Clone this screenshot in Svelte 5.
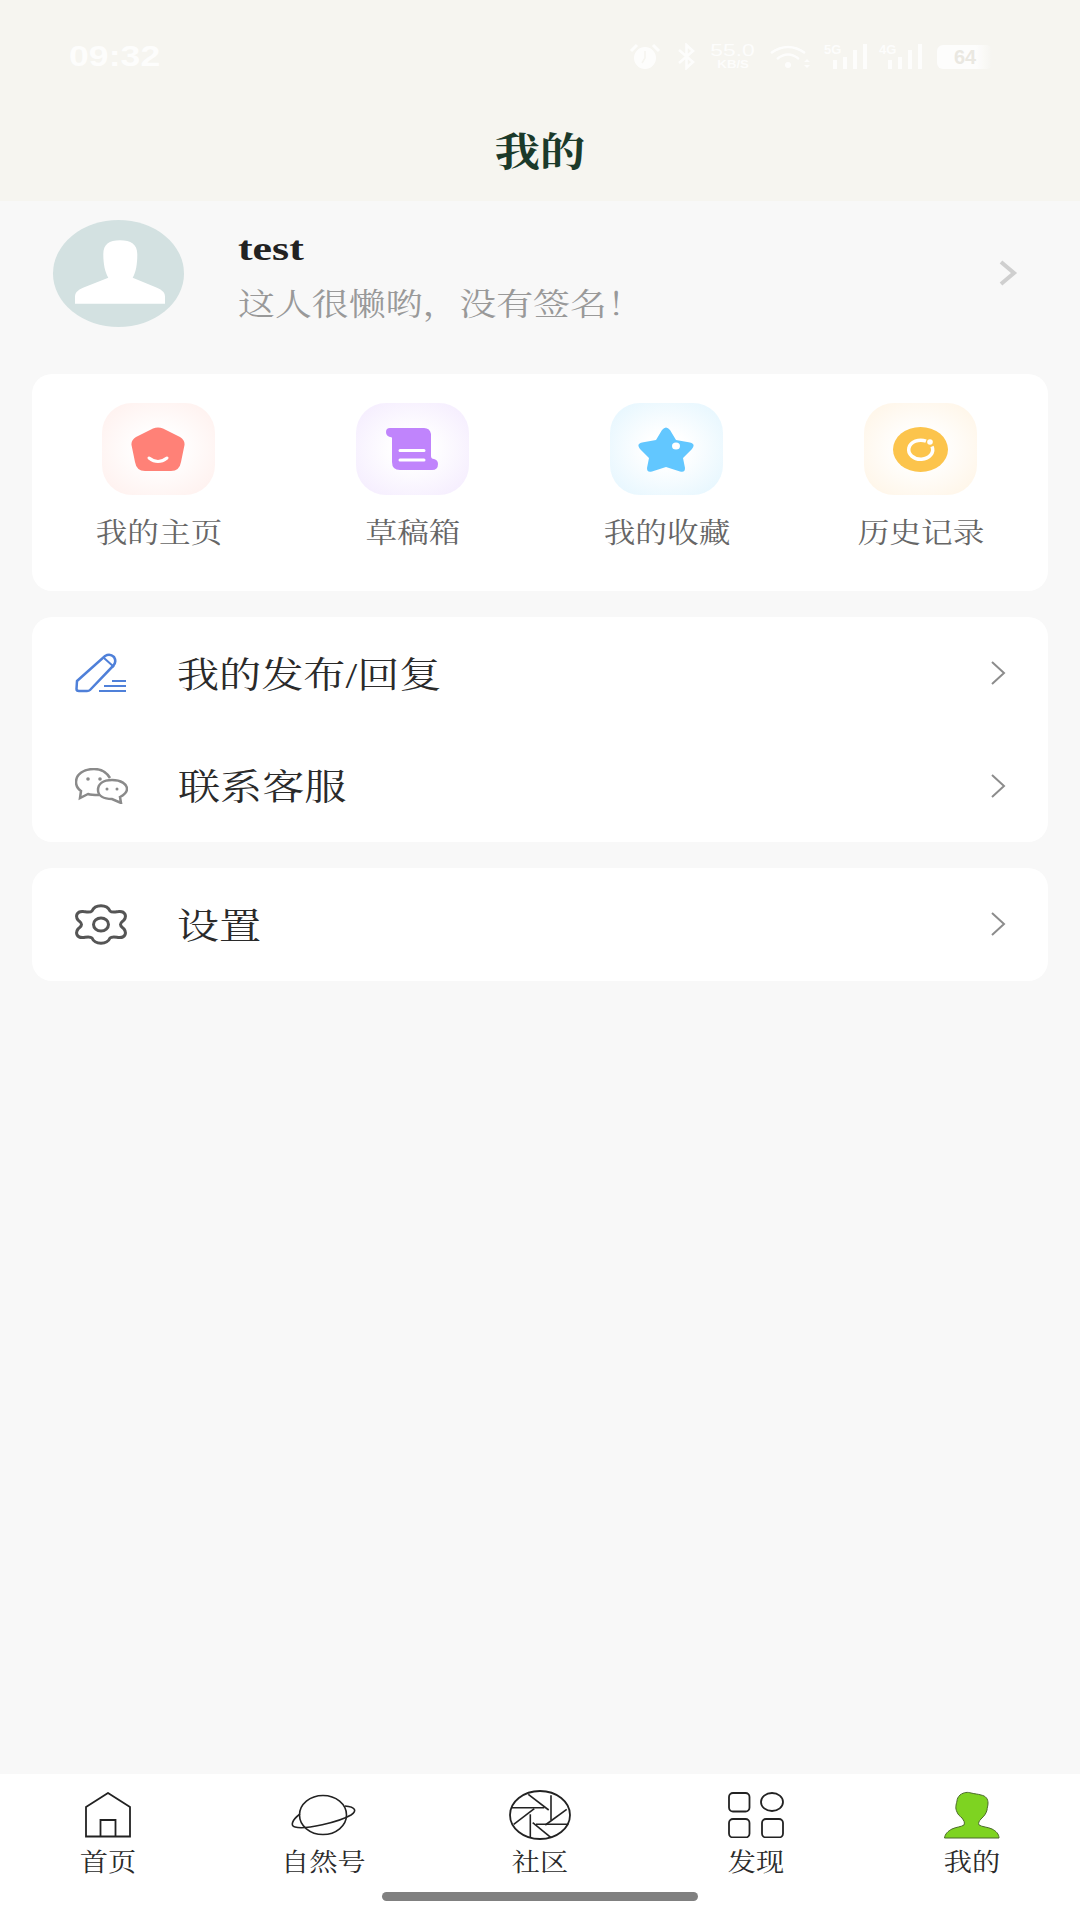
<script>
	const gridItems = [
		{ label: '我的主页', tone: 'red' },
		{ label: '草稿箱', tone: 'purple' },
		{ label: '我的收藏', tone: 'blue' },
		{ label: '历史记录', tone: 'amber' }
	];

	const tabs = ['首页', '自然号', '社区', '发现', '我的'];

	// shutter blades of the community tab icon
	const blades = [
		[19.3, 4.3, 39.7, 20],
		[42, 5.3, 42, 30],
		[57.7, 19.3, 36.3, 35],
		[59.3, 34.3, 27, 34.3],
		[42, 47.7, 23.7, 32.7],
		[21.3, 47.7, 21.3, 24.3],
		[4.7, 34.3, 25.3, 18.7],
		[3, 17.7, 35.3, 17.7]
	];
</script>

<div class="page">
	<header class="top">
		<div class="status">
			<span class="time">09:32</span>
			<div class="status-icons">
				<svg width="32" height="27" viewBox="0 0 32 27">
					<circle cx="16" cy="15" r="11" fill="#fff" />
					<path d="M2 8 L8 2 M30 8 L24 2" stroke="#fff" stroke-width="3" />
					<path d="M16 8v7l-3 5" stroke="#f6f5f0" stroke-width="1.5" fill="none" />
				</svg>
				<svg class="bt" width="19" height="27" viewBox="0 0 19 27">
					<path d="M2 7 L16 19 L9.5 25 V2 L16 8 L2 20" stroke="#fff" stroke-width="2.6" fill="none" />
				</svg>
				<div class="speed"><b>55.0</b><i>KB/S</i></div>
				<svg class="wifi" width="42" height="24" viewBox="0 0 42 24">
					<path d="M1 8 Q18 -4 35 8 M7 14 Q18 5 29 14" stroke="#fff" stroke-width="2.6" fill="none" />
					<circle cx="18" cy="20" r="3" fill="#fff" />
					<path d="M37 14l3 3h-6zM37 23l3-3h-6z" fill="#fff" />
				</svg>
				{#each ['5G', '4G'] as net}
					<div class="signal">
						<span class="net">{net}</span>
						<span class="bar" style="height: 9px"></span>
						<span class="bar" style="height: 12px"></span>
						<span class="bar" style="height: 19px"></span>
						<span class="bar" style="height: 25px"></span>
					</div>
				{/each}
				<div class="battery"><span>64</span></div>
			</div>
		</div>
		<h1><span class="wide">我的</span></h1>
	</header>

	<main>
		<section class="profile">
			<div class="avatar">
				<svg width="90" height="64" viewBox="0 0 90 63.3">
					<path d="M28.3 14 C28.300 4 34 0 45 0 C56 0 62.300 4 62.300 14 C62.300 24 61 32 57.700 37.300 L82 47.500 Q90 51 90 56 V63.300 H0 V56 Q0 51 8 47.500 L33.300 37.300 C30 32 28.300 24 28.300 14Z" fill="#fff" />
				</svg>
			</div>
			<div class="who">
				<div class="name"><span class="wide left">test</span></div>
				<div class="bio"><span class="wide left">这人很懒哟，没有签名！</span></div>
			</div>
			<svg class="go" width="20" height="26" viewBox="0 0 20 26">
				<path d="M3 2 L16 13 L3 24" stroke="#cfcfcf" stroke-width="4" fill="none" />
			</svg>
		</section>

		<section class="card grid">
			{#each gridItems as item}
				<div class="cell">
					<div class="tile {item.tone}">
						{#if item.tone === 'red'}
							<svg width="54" height="44" viewBox="0 0 54 44">
								<path d="M22 1.5 Q27 -0.5 32 1.5 L49 10 Q54 13 53.500 18 L50 35 Q48.500 44 40 44 H14 Q5.500 44 4 35 L0.500 18 Q0 13 5 10Z" fill="#ff8177" />
								<path d="M18 31 Q27 38 36 31" stroke="#fff" stroke-width="3" stroke-linecap="round" fill="none" />
							</svg>
						{:else if item.tone === 'purple'}
							<svg width="52" height="42" viewBox="0 0 52 42">
								<path d="M4 0 H38 Q44 0 45 6 V28 Q45 31 48 31 Q52 32 52 36 Q52 42 46 42 H14 Q6 42 6 34 V10 Q6 9 4 9 Q0 8 0 4 Q0 0 4 0Z" fill="#c084fc" />
								<path d="M14 22.500 H38 M14 32 H38" stroke="#fff" stroke-width="3" stroke-linecap="round" />
							</svg>
						{:else if item.tone === 'blue'}
							<svg width="56" height="45" viewBox="0 0 56 45">
								<path d="M24 3 Q28 -2 32 3 L38 13 L52 15.500 Q58 17 54 22 L45 31 L47 41 Q47 46 42 44.500 L28 40 L14 44.500 Q9 46 9 41 L11 31 L2 22 Q-2 17 4 15.500 L18 13Z" fill="#62c7ff" />
								<ellipse cx="38" cy="19" rx="4" ry="3.500" fill="#fff" />
							</svg>
						{:else}
							<svg width="55" height="45" viewBox="0 0 55 45">
								<ellipse cx="27.500" cy="22.500" rx="27.500" ry="22.500" fill="#fcc44c" />
								<path d="M33 14.200 A12 9.500 0 1 0 39 19.500" stroke="#fff" stroke-width="3.500" fill="none" />
								<circle cx="37" cy="15" r="2.800" fill="#fff" />
							</svg>
						{/if}
					</div>
					<div class="cell-label"><span class="wide">{item.label}</span></div>
				</div>
			{/each}
		</section>

		<section class="card list">
			<div class="row">
				<svg width="52" height="40" viewBox="0 0 52 40">
					<path d="M2 28 L30 3 Q35 0 39 4 Q42 9 38 13 L15 37 Q14 38 12 38 H4 Q1.500 38 1.500 36Z" stroke="#4f80d9" stroke-width="2.500" fill="none" />
					<path d="M29 5 L39 14 M37 28 H51 M29 33 H51 M24 38 H51" stroke="#4f80d9" stroke-width="2" fill="none" />
				</svg>
				<span class="row-label"><span class="wide left">我的发布/回复</span></span>
				<svg class="more" width="16" height="26" viewBox="0 0 16 26">
					<path d="M2 2 L14 13 L2 24" stroke="#8c8c8c" stroke-width="2" fill="none" />
				</svg>
			</div>
			<div class="row">
				<svg width="53" height="36" viewBox="0 0 53 36">
					<path d="M19 1 C9 1 1 6 1 14 C1 18 3 21 6 23 L5 30 L13 26 C16 27 19 27 24 27 M35 10 C32 5 27 1 19 1" stroke="#8a8a8a" stroke-width="2.500" fill="none" />
					<path d="M37 12 C28 12 23 16 23 22 C23 28 29 31 37 31 L46 35 L45 29 C49 27 52 25 52 21 C52 16 46 12 37 12Z" stroke="#8a8a8a" stroke-width="2.500" fill="#fff" />
					<circle cx="13" cy="11" r="1.800" fill="#8a8a8a" />
					<circle cx="25" cy="11" r="1.800" fill="#8a8a8a" />
					<circle cx="32" cy="21" r="1.500" fill="#8a8a8a" />
					<circle cx="42" cy="21" r="1.500" fill="#8a8a8a" />
				</svg>
				<span class="row-label"><span class="wide left">联系客服</span></span>
				<svg class="more" width="16" height="26" viewBox="0 0 16 26">
					<path d="M2 2 L14 13 L2 24" stroke="#8c8c8c" stroke-width="2" fill="none" />
				</svg>
			</div>
		</section>

		<section class="card list single">
			<div class="row">
				<svg width="52" height="42" viewBox="-1.500 -1 51 42">
					<path d="M15 7 C18 0 30 0 33 7 C35 9 38 8 42 7.500 C48 7 50 12 47 16 C45 18 43.500 18.500 43.500 20.500 C43.500 22.500 45 23 47 25 C50 29 48 34 42 33.500 C38 33 35 32 33 34 C30 41 18 41 15 34 C13 32 10 33 6 33.500 C0 34 -2 29 1 25 C3 23 4.500 22.500 4.500 20.500 C4.500 18.500 3 18 1 16 C-2 12 0 7 6 7.500 C10 8 13 9 15 7Z" stroke="#555" stroke-width="3" fill="none" />
					<ellipse cx="24" cy="20.500" rx="7.500" ry="6.500" stroke="#555" stroke-width="3" fill="none" />
				</svg>
				<span class="row-label"><span class="wide left">设置</span></span>
				<svg class="more" width="16" height="26" viewBox="0 0 16 26">
					<path d="M2 2 L14 13 L2 24" stroke="#8c8c8c" stroke-width="2" fill="none" />
				</svg>
			</div>
		</section>
	</main>

	<nav class="tabbar">
		<div class="tabs">
			{#each tabs as tab, i}
				<div class="tab">
					<div class="tab-icon">
						{#if i === 0}
							<svg width="46" height="46" viewBox="0 0 46 46">
								<path d="M1 15 L23 1 L45 15 V44.500 H1Z M15.500 44.500 V28 H30.500 V44.500" stroke="#222" stroke-width="1.800" fill="none" />
							</svg>
						{:else if i === 1}
							<svg width="66" height="42" viewBox="0 0 66 42">
								<ellipse cx="32" cy="21" rx="23.500" ry="19.500" stroke="#222" stroke-width="1.600" fill="none" />
								<path d="M9 20 C1 26 -1 32 4 33 C14 36 48 28 60 21 C66 17 65 13 54 12" stroke="#222" stroke-width="1.600" fill="none" />
							</svg>
						{:else if i === 2}
							<svg width="62" height="50" viewBox="0 0 62 50">
								<ellipse cx="31" cy="25" rx="30" ry="24" stroke="#222" stroke-width="1.800" fill="none" />
								{#each blades as b}
									<line x1={b[0]} y1={b[1]} x2={b[2]} y2={b[3]} stroke="#222" stroke-width="1.600" />
								{/each}
							</svg>
						{:else if i === 3}
							<svg width="56" height="46" viewBox="0 0 56 46">
								<rect x="1" y="1" width="20.500" height="18.500" rx="4" stroke="#222" stroke-width="1.800" fill="none" />
								<ellipse cx="44" cy="10" rx="11" ry="9" stroke="#222" stroke-width="1.800" fill="none" />
								<rect x="1" y="27" width="20.500" height="18.500" rx="4" stroke="#222" stroke-width="1.800" fill="none" />
								<rect x="34" y="27" width="21" height="18.500" rx="4" stroke="#222" stroke-width="1.800" fill="none" />
							</svg>
						{:else}
							<svg width="56" height="48" viewBox="0 0 56 48">
								<path d="M16 4 C20 1 24 1 27 2 C31 3 34 3 37 4 C42 5 44 8 44 12 C44 15 43 17 43 19 C42 23 40 25 37 28 C35 30 34 32 35 34 C38 36 44 36 48 38 C52 40 55 43 55 47 H0.500 C1 43 4 40 8 38 C12 36 17 36 20 34 C21 31 20 30 18 27 C16 25 14 24 13 21 C11 17 12 14 13 10 C13 8 14 6 16 4Z" fill="#7ed321" stroke="#4b6b2a" stroke-width="1" />
							</svg>
						{/if}
					</div>
					<span class="tab-label"><span class="wide">{tab}</span></span>
				</div>
			{/each}
		</div>
		<div class="home-bar"></div>
	</nav>
</div>

<style>
	:global(body) {
		margin: 0;
		background: #f8f8f8;
	}

	.page {
		display: flex;
		flex-direction: column;
		height: 1920px;
		font-family: 'Liberation Serif', 'Noto Serif CJK SC', 'Noto Sans CJK SC', serif;
		background: #f8f8f8;
		overflow: hidden;
	}

	.wide {
		display: inline-block;
		transform: scaleX(1.13);
		white-space: nowrap;
	}

	.wide.left {
		transform-origin: left center;
	}

	.top {
		height: 201px;
		background: #f6f5f0;
		box-sizing: border-box;
		padding-top: 43px;
		flex-shrink: 0;
	}

	.status {
		display: flex;
		align-items: center;
		justify-content: space-between;
		height: 27px;
		padding: 0 87px 0 69px;
		color: #fff;
	}

	.time {
		font-family: 'Liberation Sans', sans-serif;
		font-size: 29px;
		font-weight: 700;
		transform: scaleX(1.23);
		transform-origin: left center;
		opacity: 0.85;
	}

	.status-icons {
		display: flex;
		align-items: center;
		gap: 12px;
		opacity: 0.85;
	}

	.bt {
		margin-left: 4px;
	}

	.speed {
		display: flex;
		flex-direction: column;
		align-items: center;
		font-family: 'Liberation Sans', sans-serif;
		width: 50px;
	}

	.speed b {
		font-size: 17px;
		line-height: 16px;
		font-weight: 400;
		transform: scaleX(1.35);
	}

	.speed i {
		font-size: 11px;
		line-height: 11px;
		font-style: normal;
		font-weight: 700;
		transform: scaleX(1.2);
	}

	.signal {
		position: relative;
		display: flex;
		align-items: flex-end;
		gap: 6px;
		width: 43px;
		height: 25px;
		justify-content: flex-end;
	}

	.signal .net {
		position: absolute;
		left: 0;
		top: -2px;
		font: 700 13px 'Liberation Sans', sans-serif;
	}

	.signal .bar {
		width: 4px;
		background: #fff;
	}

	.battery {
		width: 56px;
		height: 24px;
		margin-left: 3px;
		background: linear-gradient(90deg, #fff 0 70%, #f6f5f0 100%);
		border-radius: 6px;
		color: #e8e6df;
		font: 700 20px/24px 'Liberation Sans', sans-serif;
		text-align: center;
	}

	h1 {
		margin: 60px 0 0;
		text-align: center;
		font-size: 40px;
		line-height: 46px;
		font-weight: 700;
		color: #1b3a2a;
	}

	main {
		flex: 1;
		display: flex;
		flex-direction: column;
	}

	.profile {
		display: flex;
		align-items: flex-start;
		padding: 19px 0 47px 53px;
	}

	.avatar {
		width: 131px;
		height: 107px;
		border-radius: 50%;
		background: #d3e1e1;
		display: flex;
		justify-content: center;
		align-items: flex-end;
		padding: 0 0 23px 3px;
		box-sizing: border-box;
		flex-shrink: 0;
	}

	.who {
		margin-left: 54px;
		flex: 1;
	}

	.name {
		font-size: 33px;
		font-weight: 700;
		line-height: 38px;
		color: #222;
		margin-top: 10px;
	}

	.name .wide {
		transform: scaleX(1.33);
	}

	.bio {
		font-size: 31px;
		line-height: 40px;
		color: #999;
		margin-top: 17px;
	}

	.bio .wide {
		transform: scaleX(1.19);
	}

	.go {
		margin: 40px 62px 0 0;
	}

	.card {
		background: #fff;
		border-radius: 20px;
		margin: 0 32px;
	}

	.grid {
		display: grid;
		grid-template-columns: repeat(4, 1fr);
		height: 217px;
		padding-top: 29px;
		box-sizing: border-box;
	}

	.cell {
		display: flex;
		flex-direction: column;
		align-items: center;
	}

	.tile {
		width: 113px;
		height: 92px;
		margin-right: 2px;
		border-radius: 30px;
		display: flex;
		align-items: center;
		justify-content: center;
	}

	.red {
		background: radial-gradient(ellipse at center, #fff 25%, #ffefec 100%);
	}

	.purple {
		background: radial-gradient(ellipse at center, #fff 25%, #f3eafe 100%);
	}

	.blue {
		background: radial-gradient(ellipse at center, #fff 25%, #e2f5fe 100%);
	}

	.amber {
		background: radial-gradient(ellipse at center, #fff 25%, #fff4e4 100%);
	}

	.cell-label {
		margin-top: 22px;
		font-size: 28px;
		line-height: 34px;
		color: #666;
	}

	.list {
		margin-top: 26px;
	}

	.row {
		display: flex;
		align-items: center;
		height: 112.5px;
		padding: 0 42px 0 43px;
	}

	.row svg:first-child {
		flex-shrink: 0;
	}

	.row-label {
		margin-left: 50px;
		flex: 1;
		font-size: 36px;
		line-height: 40px;
		padding-top: 5px;
		color: #2a2a2a;
	}

	.row-label .wide {
		transform: scaleX(1.17);
	}

	.tabbar {
		background: #fff;
		height: 146px;
		flex-shrink: 0;
		padding-top: 16px;
		box-sizing: border-box;
	}

	.tabs {
		display: grid;
		grid-template-columns: repeat(5, 1fr);
	}

	.tab {
		display: flex;
		flex-direction: column;
		align-items: center;
	}

	.tab-icon {
		height: 50px;
		display: flex;
		align-items: center;
		justify-content: center;
	}

	.tab-label {
		margin-top: 9px;
		font-size: 25px;
		line-height: 28px;
		color: #2a2a2a;
	}

	.home-bar {
		width: 316px;
		height: 9px;
		margin: 15px auto 0;
		border-radius: 5px;
		background: #808080;
	}
</style>
